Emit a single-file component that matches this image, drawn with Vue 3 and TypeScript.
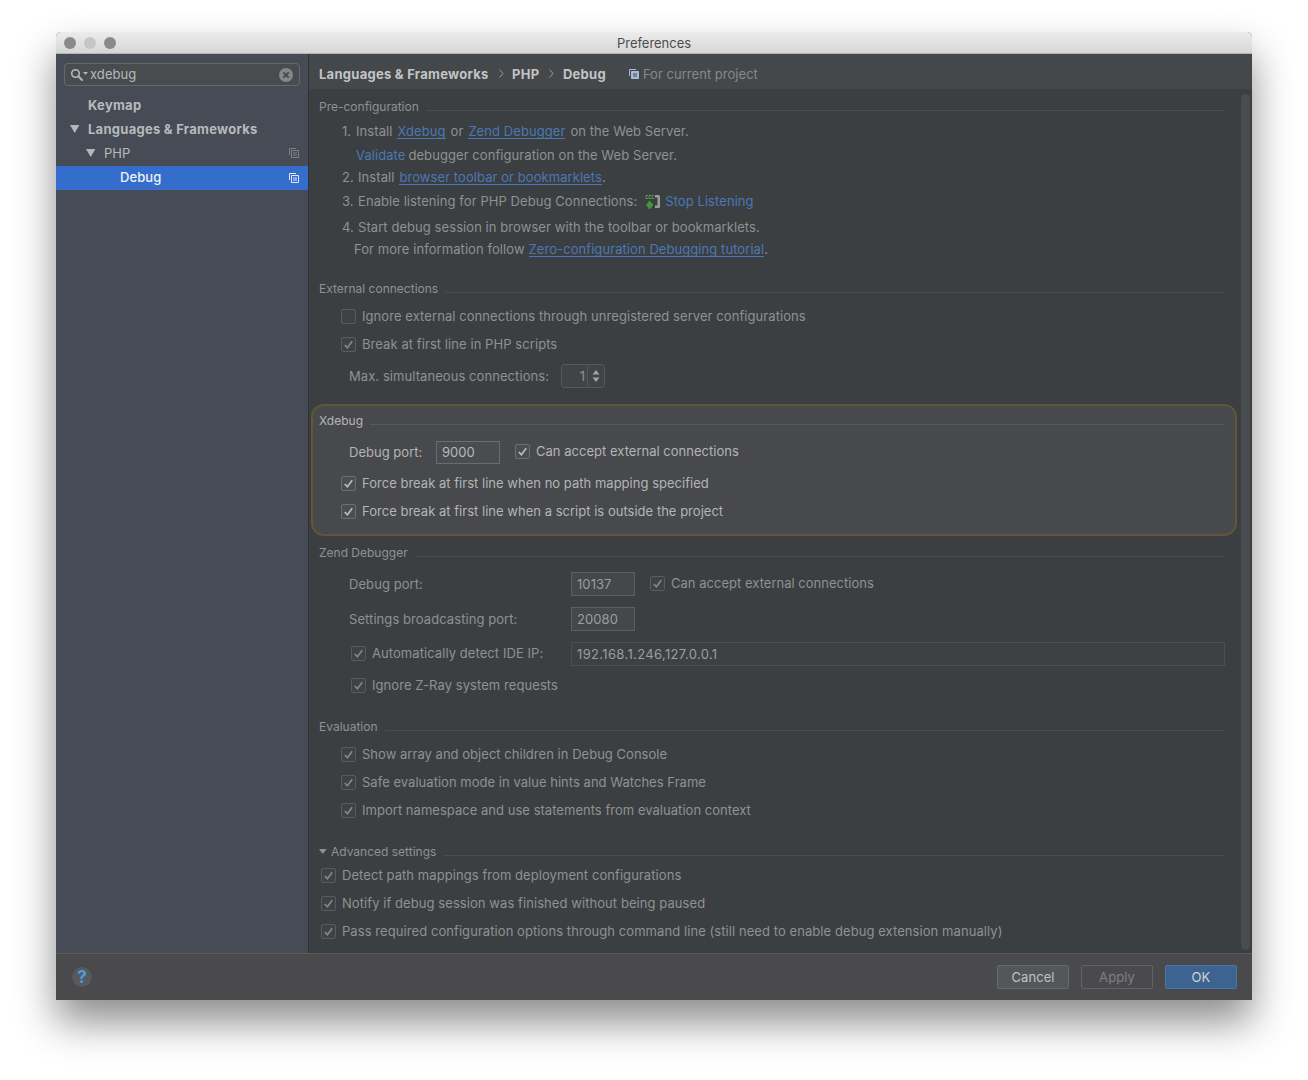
<script setup lang="ts">
const evaluation: string[] = [
  'Show array and object children in Debug Console',
  'Safe evaluation mode in value hints and Watches Frame',
  'Import namespace and use statements from evaluation context',
]
const advanced: string[] = [
  'Detect path mappings from deployment configurations',
  'Notify if debug session was finished without being paused',
  'Pass required configuration options through command line (still need to enable debug extension manually)',
]
</script>

<template>
  <div class="page">
    <div class="window">
      <header class="titlebar">
        <div class="lights"><i class="dot"></i><i class="dot mid"></i><i class="dot"></i></div>
        <span class="wintitle">Preferences</span>
      </header>

      <div class="body">
        <aside class="sidebar">
          <div class="search">
            <svg class="mag" width="18" height="14" viewBox="0 0 18 14">
              <circle cx="5.5" cy="5.5" r="3.8" fill="none" stroke="#b5b7b9" stroke-width="1.6" />
              <path d="M8.4 8.4 12 12" stroke="#b5b7b9" stroke-width="2" stroke-linecap="round" />
              <path d="M13 4h5l-2.500 2.800z" fill="#b5b7b9" />
            </svg>
            <span class="searchtext">xdebug</span>
            <svg class="clear" width="14" height="14" viewBox="0 0 14 14">
              <circle cx="7" cy="7" r="7" fill="#85888a" />
              <path d="M4.300 4.300l5.400 5.400M9.700 4.300l-5.400 5.400" stroke="#45484c" stroke-width="1.800" />
            </svg>
          </div>
          <nav class="tree">
            <div class="node bold lvl0">Keymap</div>
            <div class="node bold lvl0">
              <svg class="tri tri0" width="10" height="8" viewBox="0 0 10 8"><path d="M0 0h9.400L4.700 8z" fill="#b4b7ba" /></svg>
              Languages &amp; Frameworks
            </div>
            <div class="node lvl1">
              <svg class="tri tri1" width="10" height="8" viewBox="0 0 10 8"><path d="M0 0h9.400L4.700 8z" fill="#b4b7ba" /></svg>
              PHP
              <svg class="copy" width="10" height="10" viewBox="0 0 10 10">
                <path d="M.5 7V.5H7M2.500 2.500h7v7h-7zM4 5h4M4 7h4" fill="none" stroke="#7c8084" />
              </svg>
            </div>
            <div class="node lvl2 selected">
              Debug
              <svg class="copy" width="10" height="10" viewBox="0 0 10 10">
                <path d="M.5 7V.5H7M2.500 2.500h7v7h-7zM4 5h4M4 7h4" fill="none" stroke="#dfe8f7" />
              </svg>
            </div>
          </nav>
        </aside>

        <main class="main">
          <div class="crumbs">
            <b>Languages &amp; Frameworks</b>
            <svg class="chev" width="5" height="9" viewBox="0 0 5 9"><path d="M.5.5l3.500 4-3.500 4" fill="none" stroke="#9a9c9e" /></svg>
            <b>PHP</b>
            <svg class="chev" width="5" height="9" viewBox="0 0 5 9"><path d="M.5.5l3.500 4-3.500 4" fill="none" stroke="#9a9c9e" /></svg>
            <b>Debug</b>
            <svg class="projicon" width="10" height="10" viewBox="0 0 10 10">
              <path d="M.5 7V.5H7" fill="none" stroke="#a8bbd6" />
              <path d="M2.500 2.500h7v7h-7z" fill="#a8bbd6" stroke="#a8bbd6" />
              <path d="M4 5h4M4 7h4" stroke="#45484a" />
            </svg>
            <span class="forproject">For current project</span>
          </div>

          <div class="scroller">
            <div class="content">
              <div class="row title"><span>Pre-configuration</span><i class="rule"></i></div>
              <div class="row m5 li"><span class="num">1.</span><span class="t1">Install</span><a class="link u">Xdebug</a><span>or</span><a class="link u">Zend Debugger</a><span>on the Web Server.</span></div>
              <div class="row m4 cont"><a class="link">Validate</a><span>debugger configuration on the Web Server.</span></div>
              <div class="row m2 li"><span class="num">2.</span><span class="t2">Install</span><a class="link u">browser toolbar or bookmarklets</a><span class="tight">.</span></div>
              <div class="row m4 li">
                <span class="num">3.</span><span class="t2">Enable listening for PHP Debug Connections:</span>
                <svg class="listen" width="16" height="15" viewBox="0 0 16 15">
                  <path d="M3 1.500H1v3h2M6 1.500H4v3h2M9 1.500H7v3h2" fill="none" stroke="#4f9a4c" />
                  <path d="M1.500 10h1V8.500h1V7h2v1.500H7V10h1v2H7v1.500H5.500V15h-2v-1.500h-1V12h-1z" fill="#3f9a3e" />
                  <path d="M10 1h3.500Q15 1 15 2.500v10Q15 14 13.500 14H10v-2.500h2.500v-8H10z" fill="#9a9c9d" />
                </svg>
                <a class="link">Stop Listening</a>
              </div>
              <div class="row m6 li"><span class="num">4.</span><span class="t2">Start debug session in browser with the toolbar or bookmarklets.</span></div>
              <div class="row m2 more"><span>For more information follow</span><a class="link u">Zero-configuration Debugging tutorial</a><span class="tight">.</span></div>

              <div class="row title m19"><span>External connections</span><i class="rule"></i></div>
              <div class="row m8 chk"><i class="cb off"></i><span>Ignore external connections through unregistered server configurations</span></div>
              <div class="row m8 chk">
                <i class="cb"><svg viewBox="0 0 14 14"><path d="M3 7.500l2.800 3L11 3.500" /></svg></i>
                <span>Break at first line in PHP scripts</span>
              </div>
              <div class="row m12 field">
                <span>Max. simultaneous connections:</span>
                <div class="spinner">
                  <span class="spinval">1</span>
                  <span class="arrows">
                    <svg width="8" height="14" viewBox="0 0 8 14"><path d="M4 1l3.500 4.500H.5zM4 13 .5 8.500h7z" fill="#a0a2a4" /></svg>
                  </span>
                </div>
              </div>

              <section class="highlight">
                <div class="row title"><span>Xdebug</span><i class="rule"></i></div>
                <div class="row m11 field">
                  <span class="portlabel low">Debug port:</span>
                  <span class="input low">9000</span>
                  <i class="cb after"><svg viewBox="0 0 14 14"><path d="M3 7.500l2.800 3L11 3.500" /></svg></i>
                  <span>Can accept external connections</span>
                </div>
                <div class="row m12 chk">
                  <i class="cb"><svg viewBox="0 0 14 14"><path d="M3 7.500l2.800 3L11 3.500" /></svg></i>
                  <span>Force break at first line when no path mapping specified</span>
                </div>
                <div class="row m8 chk">
                  <i class="cb"><svg viewBox="0 0 14 14"><path d="M3 7.500l2.800 3L11 3.500" /></svg></i>
                  <span>Force break at first line when a script is outside the project</span>
                </div>
              </section>

              <div class="row title m6"><span>Zend Debugger</span><i class="rule"></i></div>
              <div class="row m12 field">
                <span class="zlabel">Debug port:</span>
                <span class="input">10137</span>
                <i class="cb after high"><svg viewBox="0 0 14 14"><path d="M3 7.500l2.800 3L11 3.500" /></svg></i>
                <span class="high accept">Can accept external connections</span>
              </div>
              <div class="row m15 field">
                <span class="zlabel">Settings broadcasting port:</span>
                <span class="input">20080</span>
              </div>
              <div class="row m14 zchk">
                <i class="cb"><svg viewBox="0 0 14 14"><path d="M3 7.500l2.800 3L11 3.500" /></svg></i>
                <span class="zchklabel">Automatically detect IDE IP:</span>
                <span class="input wide">192.168.1.246,127.0.0.1</span>
              </div>
              <div class="row m12 zchk">
                <i class="cb"><svg viewBox="0 0 14 14"><path d="M3 7.500l2.800 3L11 3.500" /></svg></i>
                <span>Ignore Z-Ray system requests</span>
              </div>

              <div class="row title m21"><span>Evaluation</span><i class="rule"></i></div>
              <div v-for="label in evaluation" :key="label" class="row m8 chk evalrow">
                <i class="cb"><svg viewBox="0 0 14 14"><path d="M3 7.500l2.800 3L11 3.500" /></svg></i>
                <span>{{ label }}</span>
              </div>

              <div class="row title m21">
                <svg class="advcaret" width="8" height="5" viewBox="0 0 8 5"><path d="M0 0h7.600L3.800 5z" fill="#8f9192" /></svg>
                <span>Advanced settings</span><i class="rule"></i>
              </div>
              <div v-for="(label, i) in advanced" :key="label" class="row adv" :class="i === 0 ? 'm4' : 'm8'">
                <i class="cb"><svg viewBox="0 0 14 14"><path d="M3 7.500l2.800 3L11 3.500" /></svg></i>
                <span>{{ label }}</span>
              </div>
            </div>
            <div class="scrollbar"></div>
          </div>
        </main>
      </div>

      <footer class="footer">
        <span class="help">?</span>
        <div class="buttons">
          <button class="btn">Cancel</button>
          <button class="btn ghost">Apply</button>
          <button class="btn primary">OK</button>
        </div>
      </footer>
    </div>
  </div>
</template>

<style>
html, body { background: #fff; }
</style>

<style scoped>
.page {
  width: 1308px;
  height: 1080px;
  box-sizing: border-box;
  padding: 32px 0 0 56px;
  overflow: hidden;
  background: #fff;
}
.window {
  width: 1196px;
  height: 968px;
  display: flex;
  flex-direction: column;
  border-radius: 5px 5px 0 0;
  background: #3c3f41;
  box-shadow: 0 22px 40px rgba(0, 0, 0, 0.45);
  font-family: Inter, "Liberation Sans", sans-serif;
  font-size: 13px;
  color: #8f9192;
  overflow: hidden;
  letter-spacing: 0.07px;
}
.titlebar {
  height: 22px;
  flex: none;
  position: relative;
  display: flex;
  align-items: center;
  justify-content: center;
  background: linear-gradient(#ececec, #d6d6d6);
  border-bottom: 1px solid #b4b4b4;
  box-sizing: border-box;
}
.lights {
  position: absolute;
  left: 8px;
  top: 5px;
  display: flex;
  gap: 8px;
}
.dot {
  width: 12px;
  height: 12px;
  border-radius: 50%;
  background: #8a8a8a;
}
.dot.mid { background: #c6c6c8; }
.wintitle { color: #4c4c4c; font-size: 13px; letter-spacing: -0.03px; }

.body { flex: 1; display: flex; min-height: 0; }

.sidebar {
  width: 253px;
  flex: none;
  box-sizing: border-box;
  background: #464b55;
  border-right: 1px solid #2f3133;
  padding-top: 9px;
  color: #b7babd;
}
.search {
  margin: 0 8px;
  height: 23px;
  box-sizing: border-box;
  border: 1px solid #66696c;
  border-radius: 4px;
  background: #484c4f;
  display: flex;
  align-items: center;
  padding: 0 6px 0 5px;
}
.mag { flex: none; }
.searchtext { margin: -2px 0 0 2px; color: #b8b9ba; flex: 1; }
.clear { flex: none; }
.tree { margin-top: 7px; }
.node {
  height: 24px;
  display: flex;
  align-items: center;
  position: relative;
  box-sizing: border-box;
}
.bold { font-weight: 700; letter-spacing: 0.27px; }
.lvl0 { padding-left: 32px; }
.lvl1 { padding-left: 48px; }
.lvl2 { padding-left: 64px; font-weight: 500; }
.selected { background: #346dcc; color: #eef2f8; margin-top: 1px; padding-bottom: 2px; }
.tri { position: absolute; top: 8px; }
.tri0 { left: 14px; }
.tri1 { left: 30px; }
.copy { position: absolute; right: 9px; top: 7px; }

.main { flex: 1; min-width: 0; display: flex; flex-direction: column; }
.crumbs {
  height: 35px;
  flex: none;
  box-sizing: border-box;
  display: flex;
  align-items: center;
  background: #45484a;
  padding: 4px 0 0 10px;
  color: #c3c4c5;
}
.crumbs b { font-weight: 700; letter-spacing: 0.27px; }
.chev { margin: 0 8.500px 0 10px; }
.projicon { margin-left: 23px; }
.forproject { margin-left: 4px; color: #85888a; letter-spacing: 0.03px; }

.scroller { flex: 1; min-height: 0; position: relative; overflow: hidden; }
.content { padding: 7px 28px 0 10px; }
.scrollbar {
  position: absolute;
  right: 2px;
  top: 5px;
  bottom: 3px;
  width: 9px;
  border-radius: 5px;
  background: #4a4d4f;
}

.row {
  height: 20px;
  display: flex;
  align-items: center;
  white-space: nowrap;
}
.m2 { margin-top: 2px; }
.m4 { margin-top: 4px; }
.m5 { margin-top: 5px; }
.m6 { margin-top: 6px; }
.m8 { margin-top: 8px; }
.m11 { margin-top: 11px; }
.m12 { margin-top: 12px; }
.m14 { margin-top: 14px; }
.m15 { margin-top: 15px; }
.m19 { margin-top: 19px; }
.m21 { margin-top: 21px; }

.title { position: relative; font-size: 12px; letter-spacing: 0; }
.rule {
  flex: 1;
  height: 1px;
  margin: 8px 0 0 7px;
  background: #4b4e50;
}
.li { padding-left: 23px; }
.num { width: 14px; flex: none; }
.t1 { margin-right: 5px; }
.t2 { margin-left: 2px; }
.li .t2 + .link { margin-left: 5px; }
.link { color: #4a78b5; }
.u { border-bottom: 1px solid #4a78b5; line-height: 14px; }
.li > .link, .li > .link + span { margin-right: 5px; }
.li > .tight { margin-right: 0; }
.li > .link:has(+ .tight) { margin-right: 0; }
.cont { padding-left: 37px; gap: 3px; }
.more { padding-left: 35px; gap: 4px; }
.more .link { margin-right: -4px; }
.listen { margin: 0 4px 0 8px; flex: none; }

.cb {
  width: 15px;
  height: 15px;
  flex: none;
  box-sizing: border-box;
  border: 1px solid #595c5e;
  border-radius: 2px;
  background: #3f4244;
  display: flex;
}
.cb svg { width: 13px; height: 13px; }
.cb path { fill: none; stroke: #85888a; stroke-width: 1.8; }
.chk { padding-left: 22px; gap: 6px; }
.evalrow { letter-spacing: 0.03px; }
.zchk { padding-left: 32px; gap: 6px; }
.adv { padding-left: 2px; gap: 6px; }
.field { padding-left: 30px; }
.zlabel { width: 222px; flex: none; }
.zchklabel { width: 193px; flex: none; }
.portlabel { width: 87px; flex: none; color: #b4b5b6; }
.low { margin-top: 2px; }
.high { margin-top: -2px; }
.accept { letter-spacing: 0.02px; }
.input {
  width: 64px;
  height: 24px;
  flex: none;
  box-sizing: border-box;
  border: 1px solid #5c5f61;
  background: #45484a;
  padding-left: 5px;
  display: flex;
  align-items: center;
  color: #9b9d9e;
}
.input.wide {
  flex: 1;
  width: auto;
  margin: 2px -1px 0 0;
  background: #3e4143;
  border-color: #4c4f51;
  letter-spacing: 0.35px;
}
.cb.after { margin-left: 15px; margin-right: 6px; }
.spinner {
  width: 44px;
  height: 24px;
  margin-left: 12px;
  box-sizing: border-box;
  border: 1px solid #55585a;
  border-radius: 3px;
  background: #414446;
  display: flex;
  align-items: center;
}
.spinval { flex: 1; text-align: right; padding-right: 2px; }
.arrows {
  width: 16px;
  height: 100%;
  border-left: 1px solid #55585a;
  display: flex;
  align-items: center;
  justify-content: center;
}

.highlight {
  margin: 18px -13px 0 -8px;
  padding: 4px 11px 12px 6px;
  height: 132px;
  box-sizing: border-box;
  border: 2px solid #615636;
  border-radius: 13px;
  background: #47494c;
  color: #b4b5b6;
  letter-spacing: 0.02px;
}
.highlight .title { letter-spacing: 0; }
.highlight .rule { background: #57595c; }
.highlight .cb { border-color: #6c6f71; background: #4b4e51; }
.highlight .cb path { stroke: #bcbdbe; }
.highlight .input { color: #b8b9ba; border-color: #6a6d6f; background: #4a4d4f; height: 23px; }

.advcaret { margin-right: 4px; flex: none; }

.footer {
  height: 47px;
  flex: none;
  box-sizing: border-box;
  border-top: 1px solid #595b5d;
  background: #4a4a4c;
  display: flex;
  align-items: center;
  justify-content: space-between;
  padding: 0 15px;
}
.help {
  width: 22px;
  height: 22px;
  border-radius: 50%;
  background: #565a5e;
  border: 1px solid #44464a;
  box-sizing: border-box;
  color: #4b9fdc;
  font-weight: 700;
  font-size: 17px;
  display: flex;
  align-items: center;
  justify-content: center;
}
.buttons { display: flex; gap: 12px; }
.btn {
  width: 72px;
  height: 24px;
  box-sizing: border-box;
  padding: 0;
  border: 1px solid #66696b;
  border-radius: 2px;
  background: #53575a;
  color: #c0c1c2;
  font: inherit;
  letter-spacing: inherit;
}
.btn.ghost { background: transparent; border-color: #616365; color: #7f8183; }
.btn.primary { background: #3d6491; border-color: #4a76a8; color: #cfd3d8; }
</style>
